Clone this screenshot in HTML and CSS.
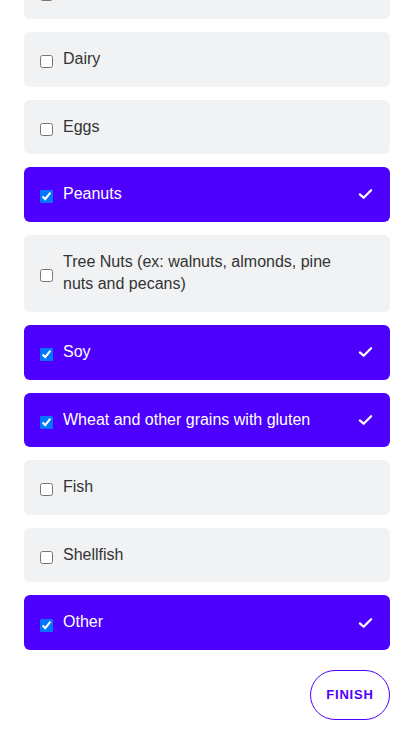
FILE: index.html
```html
<!DOCTYPE html>
<html>
<head>
<meta charset="utf-8">
<link rel="stylesheet" href="styles.css">
</head>
<body>
<div class="list">
  <label class="opt"><input type="checkbox"><span class="txt">Milk</span></label>
  <label class="opt"><input type="checkbox"><span class="txt">Dairy</span></label>
  <label class="opt"><input type="checkbox"><span class="txt">Eggs</span></label>
  <label class="opt on"><input type="checkbox" checked><span class="txt">Peanuts</span><svg class="tick" viewBox="0 0 16 12"><path d="M2 6.5 L6 10 L14 2" fill="none" stroke="#fff" stroke-width="2.4" stroke-linecap="round" stroke-linejoin="round"/></svg></label>
  <label class="opt"><input type="checkbox"><span class="txt">Tree Nuts (ex: walnuts, almonds, pine nuts and pecans)</span></label>
  <label class="opt on"><input type="checkbox" checked><span class="txt">Soy</span><svg class="tick" viewBox="0 0 16 12"><path d="M2 6.5 L6 10 L14 2" fill="none" stroke="#fff" stroke-width="2.4" stroke-linecap="round" stroke-linejoin="round"/></svg></label>
  <label class="opt on"><input type="checkbox" checked><span class="txt">Wheat and other grains with gluten</span><svg class="tick" viewBox="0 0 16 12"><path d="M2 6.5 L6 10 L14 2" fill="none" stroke="#fff" stroke-width="2.4" stroke-linecap="round" stroke-linejoin="round"/></svg></label>
  <label class="opt"><input type="checkbox"><span class="txt">Fish</span></label>
  <label class="opt"><input type="checkbox"><span class="txt">Shellfish</span></label>
  <label class="opt on"><input type="checkbox" checked><span class="txt">Other</span><svg class="tick" viewBox="0 0 16 12"><path d="M2 6.5 L6 10 L14 2" fill="none" stroke="#fff" stroke-width="2.4" stroke-linecap="round" stroke-linejoin="round"/></svg></label>
  <div class="actions"><button class="finish">FINISH</button></div>
</div>
</body>
</html>
```
FILE: styles.css
```css
html, body {
  margin: 0;
  padding: 0;
  background: #fff;
  font-family: "Liberation Sans", Arial, sans-serif;
}
.list {
  display: flex;
  flex-direction: column;
  gap: 13px;
  padding: 0 24px 20px;
  margin-top: -35.6px;
}
.opt {
  display: flex;
  align-items: center;
  background: #f1f2f4;
  border-radius: 6px;
  padding: 16px 17px 16px 16px;
  font-size: 16px;
  line-height: 22.6px;
  color: #333;
}
.opt input {
  margin: 5px 10px 0 0;
  width: 13px;
  height: 13px;
  flex: none;
}
.opt .txt {
  flex: 1;
  padding-right: 28px;
}
.opt.on {
  background: #4d00fd;
  color: #fff;
}
.tick {
  width: 15px;
  height: 12px;
  flex: none;
}
.actions {
  display: flex;
  justify-content: flex-end;
  margin-top: 7px;
}
.finish {
  width: 80px;
  height: 50px;
  border: 1px solid #4d00fd;
  border-radius: 25px;
  background: #fff;
  color: #4d00fd;
  font-family: "Liberation Sans", Arial, sans-serif;
  font-weight: bold;
  font-size: 13px;
  letter-spacing: 0.8px;
  padding: 0;
}
```
